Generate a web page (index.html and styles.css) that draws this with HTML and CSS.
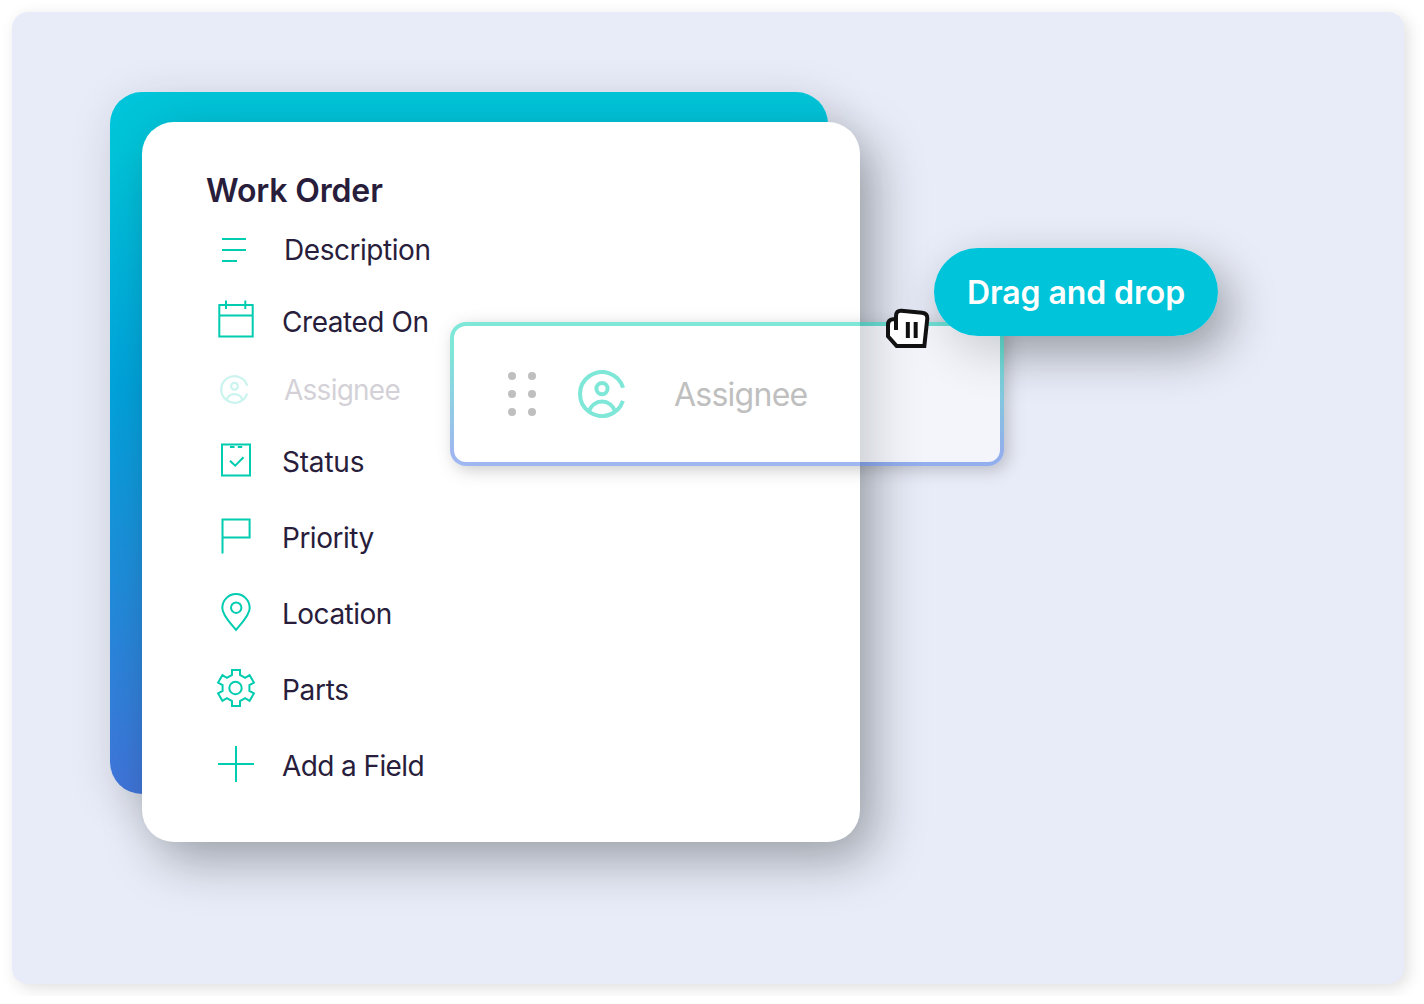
FILE: index.html
```html
<!DOCTYPE html>
<html lang="en">
<head>
<meta charset="utf-8">
<title>Work Order</title>
<link rel="stylesheet" href="styles.css">
</head>
<body>
<svg class="defs" width="0" height="0" aria-hidden="true">
  <symbol id="person" viewBox="-24 -24 48 48">
    <path d="M21.1-6.2A22 22 0 1 0 20.9 6.9M-13 17.2A13.6 13.6 0 0 1 13 17.2"/>
    <circle cx="0" cy="-5.4" r="5.6"/>
  </symbol>
</svg>
<main class="stage">
  <section class="stack">
    <div class="backdrop"></div>
    <div class="card">
      <h1 class="title">Work Order</h1>
      <ul class="fields">
        <li class="field inset">
          <svg class="icon" viewBox="0 0 40 40"><path d="M6 9H30M6 20H30M6 31H21"/></svg>
          <span class="label description">Description</span>
        </li>
        <li class="field">
          <svg class="icon" viewBox="0 0 40 40"><path d="M3.3 5H36.7V36.4H3.3ZM3.3 15.4H36.7M10 0.5V9M29.3 0.5V9"/></svg>
          <span class="label created">Created On</span>
        </li>
        <li class="field inset muted">
          <svg class="icon person-small"><use href="#person"/></svg>
          <span class="label assignee">Assignee</span>
        </li>
        <li class="field last-compact">
          <svg class="icon" viewBox="0 0 40 40"><path d="M6 4.4H34V35.5H6ZM14 7H18.5M21.8 7H26.2M14 20.7L19.2 25.7L27.5 17.2"/></svg>
          <span class="label status">Status</span>
        </li>
        <li class="field tall">
          <svg class="icon" viewBox="0 0 40 40"><path d="M6.5 37.5V3.5H33.6V21.5H6.5"/></svg>
          <span class="label priority">Priority</span>
        </li>
        <li class="field tall">
          <svg class="icon" viewBox="0 0 40 40"><path d="M20 38C15 31.6 6.3 23.5 6.3 16A13.7 14 0 0 1 33.7 16C33.7 23.5 25 31.6 20 38Z"/><circle cx="20.2" cy="15.7" r="5.2"/></svg>
          <span class="label location">Location</span>
        </li>
        <li class="field tall">
          <svg class="icon" viewBox="-20 -20 40 40"><path d="M-4-13V-18H4V-13L9.1-10.2 13.6-12.8 17.9-5.4 13.4-2.8V2.8L17.9 5.4 13.6 12.8 9.1 10.2 4 13V18H-4V13L-9.1 10.2-13.6 12.8-17.9 5.4-13.4 2.8V-2.8L-17.9-5.4-13.6-12.8-9.1-10.2Z"/><circle cx="-.5" cy="0" r="6.2"/></svg>
          <span class="label parts">Parts</span>
        </li>
        <li class="field tall">
          <svg class="icon" viewBox="0 0 40 40"><path d="M20 2V38M2 20H38"/></svg>
          <span class="label add">Add a Field</span>
        </li>
      </ul>
    </div>
  </section>
  <div class="pill-shadow"></div>
  <div class="drag-row">
    <svg class="grip" viewBox="0 0 28 44"><circle cx="4" cy="4" r="4"/><circle cx="24" cy="4" r="4"/><circle cx="4" cy="22" r="4"/><circle cx="24" cy="22" r="4"/><circle cx="4" cy="40" r="4"/><circle cx="24" cy="40" r="4"/></svg>
    <svg class="person-large"><use href="#person"/></svg>
    <span class="drag-label">Assignee</span>
  </div>
  <div class="pill"><span class="pill-text">Drag and drop</span></div>
  <svg class="cursor" viewBox="0 0 240 210">
    <path class="hand" d="M78 105V64Q78 46 94 47L156 53Q173 55 172 70L163 153H80L54 124V90Q54 74 69 73H78"/>
    <path class="fingers" d="M113.5 81V129M137 81V129"/>
  </svg>
</main>
</body>
</html>
```
FILE: styles.css
```css
* { box-sizing: border-box; }
body {
  margin: 0;
  padding: 12px;
  background: #fff;
  font-family: Inter, "Liberation Sans", sans-serif;
  color: #281d3b;
}
.defs { position: absolute; }
.stage {
  position: relative;
  width: 1392px;
  height: 972px;
  padding: 80px 0 0 98px;
  border-radius: 16px;
  background: #e8ecf8;
  box-shadow: 4px 4px 16px rgba(0, 0, 0, .13);
}
.stack {
  position: relative;
  width: 750px;
  padding: 30px 0 0 32px;
}
.backdrop {
  position: absolute;
  top: 0;
  left: 0;
  width: 718px;
  height: 702px;
  border-radius: 32px;
  background: linear-gradient(177deg, #00c4d9 8%, #00a4dc 39%, #4472da 98%);
  box-shadow: 8px 12px 48px rgba(25, 35, 35, .18);
}
.card {
  position: relative;
  width: 718px;
  height: 720px;
  padding: 48px 65px;
  border-radius: 32px;
  background: #fff;
  box-shadow: 14px 18px 50px rgba(20, 28, 28, .36);
}
.title {
  margin: 0 0 5px -1px;
  font-size: 32px;
  line-height: 42px;
  height: 40px;
  font-weight: 600;
  letter-spacing: -.15px;
  white-space: nowrap;
}
.fields {
  margin: 0;
  padding: 0 0 0 9px;
  list-style: none;
}
.field {
  display: flex;
  align-items: center;
  gap: 26px;
  height: 70px;
}
.inset { gap: 28px; }
.last-compact { margin-bottom: 3px; }
.tall { height: 76px; }
.icon {
  flex: none;
  width: 40px;
  height: 40px;
  fill: none;
  stroke: #00ccaf;
  stroke-width: 2;
}
.label {
  padding-top: 4px;
  font-size: 28px;
  line-height: 34px;
  white-space: nowrap;
}
.inset .label { padding-top: 0; }
.description { letter-spacing: -.45px; }
.created { letter-spacing: -.45px; }
.assignee { letter-spacing: -.75px; }
.status { letter-spacing: -.2px; }
.priority { letter-spacing: -.5px; }
.location { letter-spacing: -.5px; }
.parts { letter-spacing: -.3px; }
.add { letter-spacing: -.6px; }
.muted { opacity: .2; }
.person-small {
  width: 29px;
  height: 29px;
  margin: 0 5.5px 1px 3.5px;
  stroke-width: 3.6;
}
.muted { gap: 30px; }
.pill, .pill-shadow {
  position: absolute;
  top: 236px;
  left: 922px;
  width: 284px;
  height: 88px;
  border-radius: 44px;
}
.pill-shadow { box-shadow: 12px 18px 46px rgba(20, 28, 28, .38); }
.pill {
  display: flex;
  align-items: center;
  padding: 1px 0 0 33px;
  background: #00c4d9;
}
.pill-text {
  color: #fff;
  font-size: 32px;
  font-weight: 600;
  letter-spacing: -.1px;
  white-space: nowrap;
}
.drag-row {
  position: absolute;
  top: 310px;
  left: 438px;
  display: flex;
  align-items: center;
  width: 554px;
  height: 144px;
  padding-left: 54px;
  border: 4px solid transparent;
  border-radius: 16px;
  background: linear-gradient(#fff, #fff) padding-box, linear-gradient(#00d0b2 20%, #4072e2 90%) border-box;
  box-shadow: 4px 4px 16px rgba(0, 0, 0, .4);
  opacity: .5;
}
.grip {
  width: 28px;
  height: 44px;
  fill: #808080;
}
.person-large {
  width: 48px;
  height: 48px;
  margin: 0 48px 0 42px;
  fill: none;
  stroke: #00d0b2;
  stroke-width: 4;
}
.drag-label {
  padding-top: 1px;
  color: #808080;
  font-size: 32px;
  letter-spacing: -.75px;
  white-space: nowrap;
}
.cursor {
  position: absolute;
  top: 283px;
  left: 858px;
  width: 80px;
  height: 70px;
  fill: #fff;
  stroke: #111;
  stroke-width: 12;
}
```
